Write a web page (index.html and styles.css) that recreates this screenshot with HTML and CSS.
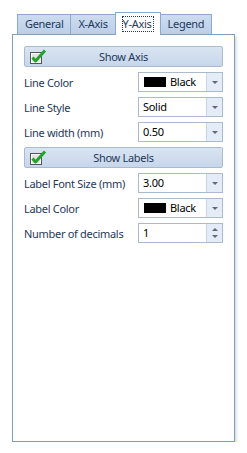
FILE: index.html
```html
<!DOCTYPE html>
<html lang="en">

<head>
    <meta charset="UTF-8">
    <link rel="stylesheet" href="styles.css">
    <title>Y-Axis</title>
</head>

<body>
    <div class="wrapper">
        <div class="tabs">
            <div class="tab">General</div>
            <div class="tab">X-Axis</div>
            <div class="tab active"><span class="focus">Y-Axis</span></div>
            <div class="tab">Legend</div>
        </div>
        <div class="panel">
            <div class="toggle">
                <svg class="check" width="17" height="15" viewBox="0 0 17 15">
                    <rect x="0.5" y="3.5" width="11" height="11" fill="#fff" stroke="#555"/>
                    <rect x="2" y="5" width="8" height="8" fill="#e4e4e4"/>
                    <path d="M2.5 8.5 L5.5 12 L15 1.5" fill="none" stroke="#22a32a" stroke-width="3" stroke-linejoin="round"/>
                </svg>
                <span>Show Axis</span>
            </div>
            <div class="row">
                <label>Line Color</label>
                <div class="combo"><span class="swatch"></span>Black<i class="drop"></i></div>
            </div>
            <div class="row">
                <label>Line Style</label>
                <div class="combo">Solid<i class="drop"></i></div>
            </div>
            <div class="row">
                <label>Line width (mm)</label>
                <div class="combo">0.50<i class="drop"></i></div>
            </div>
            <div class="toggle">
                <svg class="check" width="17" height="15" viewBox="0 0 17 15">
                    <rect x="0.5" y="3.5" width="11" height="11" fill="#fff" stroke="#555"/>
                    <rect x="2" y="5" width="8" height="8" fill="#e4e4e4"/>
                    <path d="M2.5 8.5 L5.5 12 L15 1.5" fill="none" stroke="#22a32a" stroke-width="3" stroke-linejoin="round"/>
                </svg>
                <span>Show Labels</span>
            </div>
            <div class="row">
                <label>Label Font Size (mm)</label>
                <div class="combo">3.00<i class="drop"></i></div>
            </div>
            <div class="row">
                <label>Label Color</label>
                <div class="combo"><span class="swatch"></span>Black<i class="drop"></i></div>
            </div>
            <div class="row">
                <label>Number of decimals</label>
                <div class="combo">1<i class="spin"><b class="up"></b><b class="down"></b></i></div>
            </div>
        </div>
    </div>
</body>

</html>
```

FILE: styles.css
```css
* {
    padding: 0;
    margin: 0;
    box-sizing: border-box;
}

body {
    background: #fff;
    font-family: "Noto Sans", "DejaVu Sans", sans-serif;
    font-size: 11px;
    letter-spacing: -0.3px;
    color: #1e395b;
}

.wrapper {
    padding: 12px 0 0 12px;
    width: 235px;
}

.tabs {
    display: flex;
    align-items: flex-end;
    padding-left: 5px;
    height: 22px;
    position: relative;
    z-index: 1;
}

.tab {
    height: 20px;
    padding: 0 7px;
    line-height: 18px;
    border: 1px solid #8da8cc;
    border-bottom: none;
    background: linear-gradient(#cddcef, #bccfe8);
    color: #1e395b;
    margin-left: -1px;
}

.tab:first-child {
    margin-left: 0;
}

.tab.active {
    height: 23px;
    margin-bottom: -1px;
    background: #fff;
    border-color: #8da8cc;
    padding: 2px 6px 0;
}

.tab .focus {
    display: inline-block;
    line-height: 13px;
    border: 1px dotted #1e395b;
    padding: 0 1px 1px 0;
}

.panel {
    border: 1px solid #7f9db9;
    height: 408px;
    padding: 11px 11px 0;
    box-shadow: 2px 2px 2px #dde2e8;
}

.toggle {
    position: relative;
    height: 21px;
    border: 1px solid #a9bbd2;
    border-radius: 2px;
    background: linear-gradient(#d9e4f2, #c7d6ea);
    text-align: center;
    line-height: 19px;
    margin-bottom: 5px;
}

.toggle .check {
    position: absolute;
    left: 5px;
    top: 2px;
}

.row {
    display: flex;
    align-items: center;
    justify-content: space-between;
    height: 20px;
    margin-bottom: 5px;
}

.row label {
    color: #1e395b;
}

.combo {
    position: relative;
    width: 85px;
    height: 20px;
    border: 1px solid #abbad0;
    background: #fff;
    padding-left: 4px;
    line-height: 18px;
    display: flex;
    align-items: center;
    color: #000;
}

.swatch {
    width: 22px;
    height: 10px;
    background: #000;
    margin: 0 4px 0 1px;
}

.drop,
.spin {
    position: absolute;
    right: 0;
    top: 0;
    width: 16px;
    height: 18px;
    border-left: 1px solid #c8d5e5;
    background: #e4ecf7;
}

.drop::after {
    content: "";
    position: absolute;
    left: 5px;
    top: 8px;
    border-left: 3px solid transparent;
    border-right: 3px solid transparent;
    border-top: 3px solid #5d6b7e;
}

.spin .up,
.spin .down {
    position: absolute;
    left: 5px;
    border-left: 3px solid transparent;
    border-right: 3px solid transparent;
}

.spin .up {
    top: 4px;
    border-bottom: 3px solid #5d6b7e;
}

.spin .down {
    top: 11px;
    border-top: 3px solid #5d6b7e;
}
```
